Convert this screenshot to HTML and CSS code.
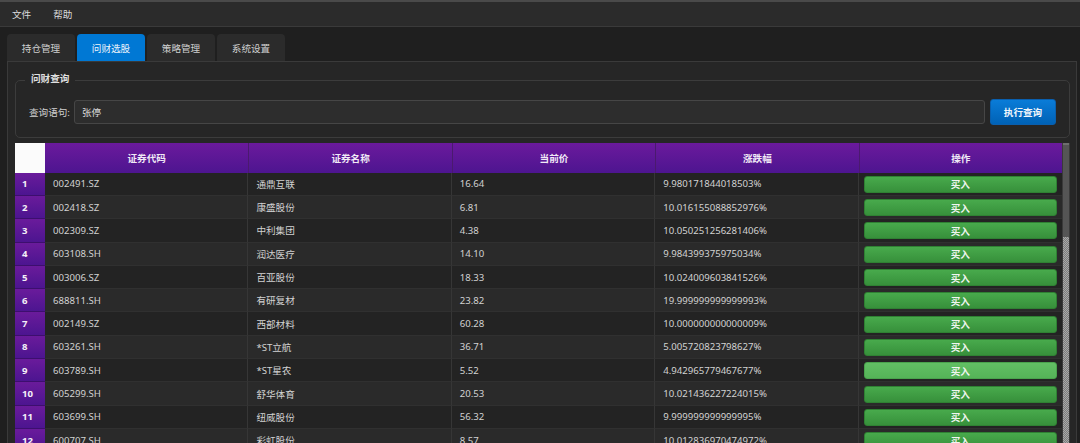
FILE: index.html
```html
<!DOCTYPE html>
<html lang="zh-CN">
<head>
<meta charset="utf-8">
<title>问财选股</title>
<link rel="stylesheet" href="styles.css">
</head>
<body>
<div class="window">
  <div class="menubar">
    <span class="menu-item">文件</span>
    <span class="menu-item">帮助</span>
  </div>
  <div class="tabs">
    <div class="tab">持仓管理</div>
    <div class="tab active">问财选股</div>
    <div class="tab">策略管理</div>
    <div class="tab">系统设置</div>
  </div>
  <div class="pane">
    <div class="group">
      <div class="group-title">问财查询</div>
      <span class="label">查询语句:</span>
      <div class="input">张停</div>
      <div class="btn-query">执行查询</div>
    </div>
    <div class="table">
      <div class="grid">
        <div class="corner"></div>
        <div class="hcell">证券代码</div>
        <div class="hcell">证券名称</div>
        <div class="hcell">当前价</div>
        <div class="hcell">涨跌幅</div>
        <div class="hcell">操作</div>

        <div class="rh">1</div><div class="cell odd">002491.SZ</div><div class="cell odd">通鼎互联</div><div class="cell odd">16.64</div><div class="cell odd">9.980171844018503%</div><div class="cell odd act"><span class="buy">买入</span></div>
        <div class="rh">2</div><div class="cell even">002418.SZ</div><div class="cell even">康盛股份</div><div class="cell even">6.81</div><div class="cell even">10.016155088852976%</div><div class="cell even act"><span class="buy">买入</span></div>
        <div class="rh">3</div><div class="cell odd">002309.SZ</div><div class="cell odd">中利集团</div><div class="cell odd">4.38</div><div class="cell odd">10.050251256281406%</div><div class="cell odd act"><span class="buy">买入</span></div>
        <div class="rh">4</div><div class="cell even">603108.SH</div><div class="cell even">润达医疗</div><div class="cell even">14.10</div><div class="cell even">9.984399375975034%</div><div class="cell even act"><span class="buy">买入</span></div>
        <div class="rh">5</div><div class="cell odd">003006.SZ</div><div class="cell odd">百亚股份</div><div class="cell odd">18.33</div><div class="cell odd">10.024009603841526%</div><div class="cell odd act"><span class="buy">买入</span></div>
        <div class="rh">6</div><div class="cell even">688811.SH</div><div class="cell even">有研复材</div><div class="cell even">23.82</div><div class="cell even">19.999999999999993%</div><div class="cell even act"><span class="buy">买入</span></div>
        <div class="rh">7</div><div class="cell odd">002149.SZ</div><div class="cell odd">西部材料</div><div class="cell odd">60.28</div><div class="cell odd">10.000000000000009%</div><div class="cell odd act"><span class="buy">买入</span></div>
        <div class="rh">8</div><div class="cell even">603261.SH</div><div class="cell even">*ST立航</div><div class="cell even">36.71</div><div class="cell even">5.005720823798627%</div><div class="cell even act"><span class="buy">买入</span></div>
        <div class="rh">9</div><div class="cell odd">603789.SH</div><div class="cell odd">*ST星农</div><div class="cell odd">5.52</div><div class="cell odd">4.942965779467677%</div><div class="cell odd act"><span class="buy hover">买入</span></div>
        <div class="rh">10</div><div class="cell even">605299.SH</div><div class="cell even">舒华体育</div><div class="cell even">20.53</div><div class="cell even">10.021436227224015%</div><div class="cell even act"><span class="buy">买入</span></div>
        <div class="rh">11</div><div class="cell odd">603699.SH</div><div class="cell odd">纽威股份</div><div class="cell odd">56.32</div><div class="cell odd">9.999999999999995%</div><div class="cell odd act"><span class="buy">买入</span></div>
        <div class="rh">12</div><div class="cell even">600707.SH</div><div class="cell even">彩虹股份</div><div class="cell even">8.57</div><div class="cell even">10.012836970474972%</div><div class="cell even act"><span class="buy">买入</span></div>
      </div>
      <div class="scrollbar">
        <div class="sb-handle"></div>
        <div class="sb-track"></div>
      </div>
    </div>
  </div>
</div>
</body>
</html>
```
FILE: styles.css
```css
* { box-sizing: border-box; }
html, body { margin: 0; padding: 0; }
body {
  width: 1080px;
  height: 443px;
  overflow: hidden;
  background: #1f1f1f;
  font-family: "Noto Sans", "Noto Sans CJK SC", sans-serif;
  font-size: 9.6px;
  color: #d4d4d4;
}
.window {
  border-top: 2px solid #4a4a4a;
  height: 443px;
  display: flex;
  flex-direction: column;
}
.menubar {
  height: 25px;
  background: #2b2b2b;
  border-bottom: 1px solid #3a3a3a;
  display: flex;
  align-items: center;
  padding-left: 1px;
  flex: none;
}
.menu-item {
  padding: 0 11px;
  color: #dcdcdc;
}
.tabs {
  display: flex;
  gap: 2px;
  margin: 7px 0 0 7px;
  height: 27px;
  flex: none;
}
.tab {
  width: 68px;
  height: 27px;
  background: #2b2b2b;
  border-radius: 4px 4px 0 0;
  display: flex;
  align-items: center;
  justify-content: center;
  color: #d0d0d0;
}
.tab.active {
  background: #0078d4;
  color: #eef4fb;
}
.pane {
  margin: 0 3px 0 7px;
  flex: 1;
  background: #262626;
  border: 1px solid #3a3a3a;
  border-bottom: none;
  padding: 18px 6px 0 7px;
  overflow: hidden;
}
.group {
  position: relative;
  height: 58px;
  border: 1px solid #3c3c3c;
  border-radius: 5px;
  display: flex;
  align-items: center;
  padding: 5px 13px 0 13px;
}
.group-title {
  position: absolute;
  top: -9px;
  left: 9px;
  padding: 0 6px;
  background: #262626;
  color: #e0e0e0;
  font-weight: 600;
  line-height: 14px;
}
.label {
  color: #d0d0d0;
  margin-right: 4px;
}
.input {
  flex: 1;
  height: 24px;
  background: #2d2d2d;
  border: 1px solid #464646;
  border-radius: 3px;
  display: flex;
  align-items: center;
  padding-left: 7px;
  color: #dedede;
}
.btn-query {
  width: 66px;
  height: 26px;
  margin-left: 5px;
  border-radius: 3px;
  background: linear-gradient(#0a7cd8, #0062b6);
  border: 1px solid #0a5fae;
  color: #f2f6fb;
  font-weight: 700;
  display: flex;
  align-items: center;
  justify-content: center;
}
.table {
  margin-top: 5px;
  display: flex;
}
.grid {
  flex: 1;
  display: grid;
  grid-template-columns: 30px repeat(5, 1fr);
  grid-template-rows: 29.7px repeat(12, 23.3px);
}
.corner {
  background: #fbfbfb;
}
.hcell {
  background: linear-gradient(#6b1a9c, #4d1590);
  border-left: 1px solid #4a1a6e;
  display: flex;
  align-items: center;
  justify-content: center;
  color: #f0eaf6;
  font-weight: 700;
}
.hcell:nth-child(2) { border-left: none; }
.rh {
  background: linear-gradient(#6a1b9b, #4c1590);
  border-bottom: 1px solid #3d0f6e;
  color: #f4f0f8;
  font-weight: 700;
  display: flex;
  align-items: center;
  padding-left: 7px;
}
.cell {
  border-right: 1px solid #363636;
  border-bottom: 1px solid #303030;
  display: flex;
  align-items: center;
  padding-left: 8px;
  color: #d2d2d2;
  white-space: nowrap;
  overflow: hidden;
}
.cell.odd { background: #232323; }
.cell.even { background: #2a2a2a; }
.cell.act {
  padding: 0 5px;
  border-right: none;
}
.buy {
  flex: 1;
  height: 17px;
  margin-top: 1px;
  border-radius: 3px;
  background: linear-gradient(#48aa4c, #37903b);
  border: 1px solid #2f8133;
  color: #f0f5f0;
  font-weight: 700;
  display: flex;
  align-items: center;
  justify-content: center;
}
.buy.hover {
  background: linear-gradient(#62bf64, #55b358);
  border-color: #4aa34d;
}
.scrollbar {
  width: 8px;
  display: flex;
  flex-direction: column;
  border-left: 1px solid #3a3a3a;
  border-right: 1px solid #3a3a3a;
}
.sb-handle {
  height: 94px;
  background: #555555;
  border-top: 2px solid #6e6e6e;
}
.sb-track {
  flex: 1;
  height: 300px;
  background: repeating-conic-gradient(#7c7c7c 0 25%, #a8a8a8 0 50%) 0 0 / 2px 2px;
}
```
